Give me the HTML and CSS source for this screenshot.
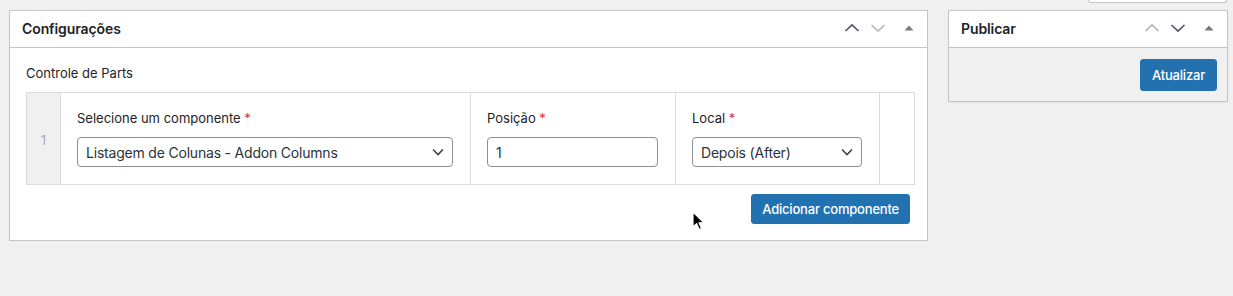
FILE: index.html
```html
<!DOCTYPE html>
<html lang="pt-BR">
<head>
	<meta charset="utf-8">
	<title>Editar – Configurações</title>
	<link rel="stylesheet" href="styles.css">
</head>
<body>

<div class="screen-meta">
	<div class="screen-meta-tab"></div>
</div>

<div class="columns">
	<div class="postbox postbox-main">
		<div class="postbox-header">
			<h2 class="hndle">Configurações</h2>
			<div class="handle-actions">
				<button class="handle-btn" type="button" aria-label="Mover para cima">
					<svg width="16" height="10" viewBox="0 0 16 10"><path d="M1.5 8 L8 2 L14.5 8" fill="none" stroke="#50575e" stroke-width="1.7"/></svg>
				</button>
				<button class="handle-btn" type="button" aria-label="Mover para baixo">
					<svg width="16" height="10" viewBox="0 0 16 10"><path d="M1.5 2 L8 8 L14.5 2" fill="none" stroke="#b4b7ba" stroke-width="1.7"/></svg>
				</button>
				<button class="handle-btn handle-toggle" type="button" aria-label="Alternar painel">
					<svg width="10" height="6" viewBox="0 0 10 6"><path d="M0.5 5.5 L5 0.5 L9.5 5.5 Z" fill="#787c82"/></svg>
				</button>
			</div>
		</div>

		<div class="inside">
			<div class="field-label">Controle de Parts</div>

			<table class="repeater">
				<tr>
					<td class="row-order">1</td>
					<td class="field field-component">
						<label>Selecione um componente <span class="required">*</span></label>
						<div class="select-wrap">
							<select>
								<option>Listagem de Colunas - Addon Columns</option>
							</select>
							<svg class="select-arrow" width="12" height="8" viewBox="0 0 12 8"><path d="M1 1.5 L6 6.5 L11 1.5" fill="none" stroke="#3c434a" stroke-width="1.6"/></svg>
						</div>
					</td>
					<td class="field field-position">
						<label>Posição <span class="required">*</span></label>
						<input type="text" value="1">
					</td>
					<td class="field field-local">
						<label>Local <span class="required">*</span></label>
						<div class="select-wrap">
							<select>
								<option>Depois (After)</option>
							</select>
							<svg class="select-arrow" width="12" height="8" viewBox="0 0 12 8"><path d="M1 1.5 L6 6.5 L11 1.5" fill="none" stroke="#3c434a" stroke-width="1.6"/></svg>
						</div>
					</td>
					<td class="row-remove"></td>
				</tr>
			</table>

			<div class="repeater-footer">
				<button class="button-primary" type="button">Adicionar componente</button>
			</div>
		</div>
	</div>

	<div class="postbox postbox-side">
		<div class="postbox-header">
			<h2 class="hndle">Publicar</h2>
			<div class="handle-actions">
				<button class="handle-btn" type="button" aria-label="Mover para cima">
					<svg width="16" height="10" viewBox="0 0 16 10"><path d="M1.5 8 L8 2 L14.5 8" fill="none" stroke="#b4b7ba" stroke-width="1.7"/></svg>
				</button>
				<button class="handle-btn" type="button" aria-label="Mover para baixo">
					<svg width="16" height="10" viewBox="0 0 16 10"><path d="M1.5 2 L8 8 L14.5 2" fill="none" stroke="#50575e" stroke-width="1.7"/></svg>
				</button>
				<button class="handle-btn handle-toggle" type="button" aria-label="Alternar painel">
					<svg width="10" height="6" viewBox="0 0 10 6"><path d="M0.5 5.5 L5 0.5 L9.5 5.5 Z" fill="#787c82"/></svg>
				</button>
			</div>
		</div>
		<div class="publish-actions">
			<button class="button-primary button-update" type="button">Atualizar</button>
		</div>
	</div>
</div>

<svg class="cursor" width="14" height="20" viewBox="0 0 14 20">
	<path d="M1 1 L1 16 L4.6 12.6 L7.2 18.6 L9.6 17.6 L7 11.8 L12 11.8 Z" fill="#000" stroke="#fff" stroke-width="1.2" stroke-linejoin="round"/>
</svg>

</body>
</html>
```

FILE: styles.css
```css
body {
	margin: 0;
	background: #f0f0f1;
	color: #1d2327;
	font-family: Inter, "Noto Sans", sans-serif;
	font-size: 13px;
}

.screen-meta {
	display: flex;
	justify-content: flex-end;
	padding-right: 6px;
}

.screen-meta-tab {
	width: 137px;
	height: 2px;
	background: #fff;
	border: 1px solid #c3c4c7;
	border-top: 0;
	border-radius: 0 0 4px 4px;
}

.columns {
	display: flex;
	align-items: flex-start;
	gap: 20px;
	margin-top: 7px;
	padding-left: 9px;
}

.postbox {
	border: 1px solid #c3c4c7;
	box-shadow: 0 1px 1px rgba(0, 0, 0, 0.04);
}

.postbox-main {
	width: 917px;
	background: #fff;
}

.postbox-side {
	width: 278px;
}

.postbox-header {
	display: flex;
	align-items: center;
	height: 36px;
	background: #fff;
	border-bottom: 1px solid #c3c4c7;
}

.hndle {
	flex: 1;
	margin: 0 0 1px;
	padding-left: 12px;
	font-size: 14px;
	font-weight: 600;
	letter-spacing: -0.1px;
}

.handle-actions {
	display: flex;
	height: 100%;
}

.handle-btn {
	display: flex;
	align-items: center;
	justify-content: center;
	width: 26px;
	height: 100%;
	padding: 0 0 2px;
	border: 0;
	background: none;
}

.handle-toggle {
	width: 36px;
}

.inside {
	padding: 16px 16px 16px;
}

.field-label {
	line-height: 18px;
	margin-bottom: 10px;
	color: #1d2327;
}

.repeater {
	width: 887px;
	border-collapse: collapse;
	table-layout: fixed;
}

.repeater td {
	border: 1px solid #dcdcde;
	vertical-align: top;
}

.row-order {
	width: 33px;
	background: #f0f0f1;
	color: #a7aaad;
	text-align: center;
	vertical-align: middle !important;
	font-size: 13px;
	padding: 2px 0 0;
}

.field {
	padding: 15px 16px 17px 16px;
}

.field-component {
	width: 377px;
}

.field-position {
	width: 172px;
}

.field-local {
	width: 171px;
}

.row-remove {
	width: 32px;
}

.field label {
	display: block;
	line-height: 20px;
	margin-bottom: 9px;
	color: #1d2327;
}

.required {
	color: #d63638;
}

.select-wrap {
	position: relative;
	margin-right: 1px;
}

.field select,
.field input {
	box-sizing: border-box;
	display: block;
	width: 100%;
	height: 30px;
	margin: 0;
	padding: 0 8px;
	border: 1px solid #8c8f94;
	border-radius: 4px;
	background: #fff;
	color: #2c3338;
	font-family: inherit;
	font-size: 14px;
	letter-spacing: -0.2px;
	-webkit-appearance: none;
	appearance: none;
}

.field-position input {
	width: 171px;
}

.select-arrow {
	position: absolute;
	right: 9px;
	top: 11px;
	pointer-events: none;
}

.repeater-footer {
	display: flex;
	justify-content: flex-end;
	margin-top: 9px;
	padding-right: 1px;
}

.button-primary {
	height: 30px;
	padding: 0 10px;
	border: 1px solid #2271b1;
	border-radius: 3px;
	background: #2271b1;
	color: #fff;
	font-family: inherit;
	font-size: 13px;
	font-weight: 500;
	letter-spacing: -0.2px;
}

.publish-actions {
	display: flex;
	justify-content: flex-end;
	padding: 11px 10px 10px;
}

.button-update {
	height: 32px;
	padding: 0 11px;
}

.cursor {
	position: absolute;
	left: 692px;
	top: 211px;
}
```
